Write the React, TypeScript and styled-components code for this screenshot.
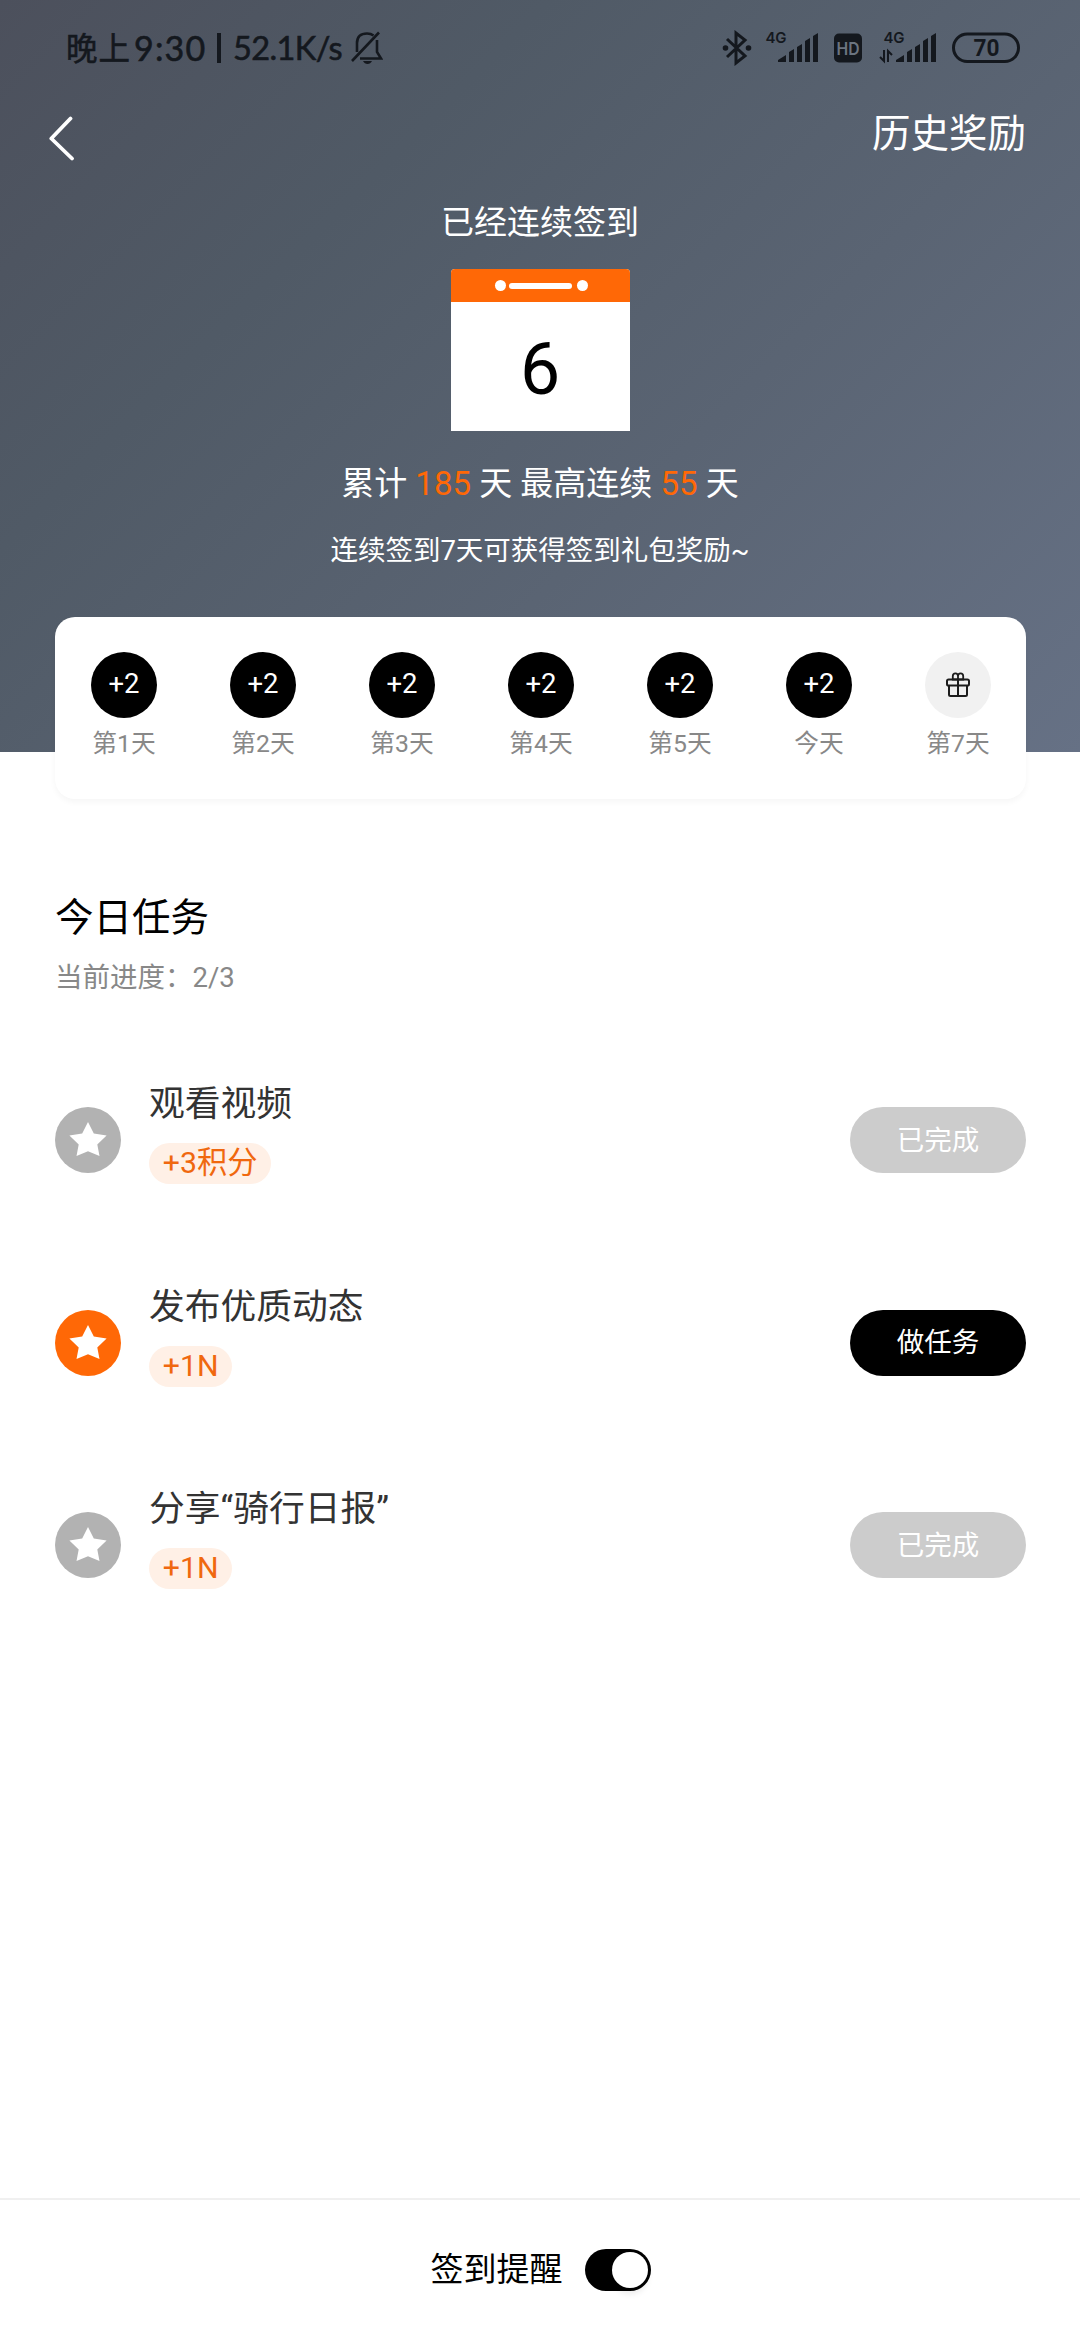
import React from 'react';
import styled, { createGlobalStyle } from 'styled-components';

const Global = createGlobalStyle`
  * { box-sizing: border-box; }
  body {
    margin: 0;
    background: #fff;
    font-family: Roboto, "Noto Sans CJK SC", sans-serif;
    font-weight: 400;
  }
`;

const Screen = styled.div`
  width: 1080px;
  height: 2340px;
  display: flex;
  flex-direction: column;
  background: #fff;
  overflow: hidden;
`;

const Hero = styled.header`
  height: 752px;
  flex: none;
  display: flex;
  flex-direction: column;
  align-items: center;
  color: #fff;
  background: linear-gradient(135deg, #4c505c 0%, #505a66 30%, #5a6473 62%, #667185 100%);
`;

const StatusBar = styled.div`
  width: 100%;
  height: 96px;
  flex: none;
  display: flex;
  align-items: center;
  justify-content: space-between;
  padding: 0 60px 0 66px;
  color: #14181e;
`;

const StatusGroup = styled.div`
  display: flex;
  align-items: center;
`;

const StatusText = styled.span<{ $width: number; $spacing?: number; $size?: number }>`
  width: ${(p) => p.$width}px;
  font-family: Lato, "Noto Sans CJK SC", sans-serif;
  font-weight: 400;
  -webkit-text-stroke: 0.6px currentColor;
  font-size: ${(p) => p.$size ?? 33}px;
  line-height: 40px;
  white-space: pre;
  letter-spacing: ${(p) => p.$spacing ?? 0}px;
`;

const Divider = styled.i`
  width: 4px;
  height: 30px;
  margin: 0 12px 0 9px;
  background: currentColor;
`;

const Icon = styled.svg<{ $gap?: number }>`
  display: block;
  flex: none;
  margin-left: ${(p) => p.$gap ?? 0}px;
`;

const NavBar = styled.nav`
  width: 100%;
  height: 84px;
  flex: none;
  display: flex;
  justify-content: space-between;
  align-items: center;
  padding: 0 54px 0 46px;
`;

const HistoryLink = styled.a`
  font-size: 38.5px;
  line-height: 56px;
  margin-top: -8px;
`;

const HeroTitle = styled.h1`
  margin: 19px 0 0;
  font-size: 33px;
  font-weight: 400;
  line-height: 48px;
`;

const Calendar = styled.div`
  width: 179px;
  height: 162px;
  margin-top: 22px;
  display: flex;
  flex-direction: column;
  border-radius: 4px 4px 0 0;
  overflow: hidden;
  background: #fff;
`;

const CalendarTop = styled.div`
  height: 33px;
  flex: none;
  display: flex;
  align-items: center;
  justify-content: center;
  padding-left: 3px;
  background: #ff6806;
`;

const Ring = styled.i`
  width: 11px;
  height: 11px;
  border-radius: 50%;
  background: #fff;
`;

const Binding = styled.i`
  width: 63px;
  height: 6px;
  margin: 0 5.5px 0 3px;
  border-radius: 3px;
  background: #fff;
`;

const CalendarDay = styled.div`
  flex: 1;
  display: flex;
  align-items: center;
  justify-content: center;
  color: #000;
  font-size: 71.5px;
  line-height: 80px;
  padding-top: 7px;
`;

const Stats = styled.p`
  margin: 29px 0 0;
  font-size: 33px;
  line-height: 48px;
  em {
    font-style: normal;
    color: #ff6806;
  }
`;

const Hint = styled.p`
  margin: 23px 0 0;
  font-size: 27.5px;
  line-height: 40px;
`;

const DaysCard = styled.section`
  height: 182px;
  flex: none;
  margin: -135px 54px 0 55px;
  padding: 35px 35px 0 36px;
  display: flex;
  justify-content: space-between;
  border-radius: 20px;
  background: #fff;
  box-shadow: 0 3px 6px rgba(0, 0, 0, 0.04);
`;

const Day = styled.div`
  width: 66px;
  display: flex;
  flex-direction: column;
  align-items: center;
`;

const DayBadge = styled.div<{ $pending?: boolean }>`
  width: 66px;
  height: 66px;
  display: flex;
  align-items: center;
  justify-content: center;
  border-radius: 50%;
  font-size: 27.5px;
  line-height: 34px;
  padding-bottom: ${(p) => (p.$pending ? 0 : 2)}px;
  color: #fff;
  background: ${(p) => (p.$pending ? '#f1f1f1' : '#000')};
`;

const DayLabel = styled.span`
  margin-top: 8px;
  font-size: 24.75px;
  line-height: 36px;
  color: #888;
  white-space: nowrap;
`;

const Tasks = styled.main`
  flex: 1;
  padding: 91px 54px 0 55px;
`;

const TasksTitle = styled.h2`
  margin: 0;
  font-size: 38.5px;
  font-weight: 400;
  line-height: 56px;
  color: #000;
`;

const Progress = styled.p`
  margin: 12px 0 0;
  font-size: 27.5px;
  line-height: 40px;
  color: #888;
`;

const TaskList = styled.ul`
  list-style: none;
  margin: 81px 0 0;
  padding: 0;
  display: flex;
  flex-direction: column;
  gap: 92.5px;
`;

const TaskRow = styled.li`
  height: 110px;
  display: flex;
  align-items: flex-start;
`;

const StarBadge = styled.div<{ $active: boolean }>`
  width: 66px;
  height: 66px;
  margin-top: 28px;
  padding-bottom: 2px;
  display: flex;
  align-items: center;
  justify-content: center;
  border-radius: 50%;
  background: ${(p) => (p.$active ? '#ff6806' : '#b2b2b2')};
`;

const TaskInfo = styled.div`
  flex: 1;
  margin-left: 28px;
  display: flex;
  flex-direction: column;
  align-items: flex-start;
`;

const TaskName = styled.span`
  font-size: 35.75px;
  line-height: 50px;
  color: #333;
`;

const Reward = styled.span`
  height: 41px;
  margin-top: 14px;
  padding: 0 13.75px;
  border-radius: 20.5px;
  font-size: 30.25px;
  line-height: 39px;
  color: #f0680f;
  background: #fff0e6;
`;

const ActionButton = styled.button<{ $done: boolean }>`
  width: 176px;
  height: 66px;
  margin-top: 28px;
  padding: 0 0 5px;
  border: 0;
  border-radius: 33px;
  font: inherit;
  font-size: 27.5px;
  color: #fff;
  background: ${(p) => (p.$done ? '#ccc' : '#000')};
`;

const Footer = styled.footer`
  height: 142px;
  flex: none;
  display: flex;
  align-items: center;
  justify-content: center;
  gap: 22px;
  padding-left: 1px;
  border-top: 2px solid #f0f0f0;
  font-size: 33px;
  line-height: 48px;
  color: #000;
`;

const Switch = styled.div`
  width: 66px;
  height: 42px;
  padding: 3px;
  display: flex;
  justify-content: flex-end;
  align-items: center;
  border-radius: 21px;
  background: #000;
`;

const Knob = styled.i`
  width: 36px;
  height: 36px;
  border-radius: 50%;
  background: #fff;
  box-shadow: 0 6px 6px rgba(0, 0, 0, 0.08);
`;

const Signal = ({ data, gap }: { data?: boolean; gap: number }) => (
  <Icon $gap={gap} width="58" height="56" viewBox="0 -10 58 56" fill="currentColor">
    <text x="4.5" y="13" fontSize="15" fontWeight="600" fontFamily="Inter, sans-serif" textLength="21">4G</text>
    <path d="M17 32v-2l8-5v7zM28 32V22l5-3v13zM36 32V17l5-3v18zM44 32V11l5-3v24zM52 32V6l5-3v29z" />
    {data && <path d="M5 20v11l-4-4M9 32V21l4 4" fill="none" stroke="currentColor" strokeWidth="2" />}
  </Icon>
);

const GiftIcon = () => (
  <Icon width="24" height="26" viewBox="0 0 24 26" fill="none" stroke="#1c1c1c" strokeWidth="2">
    <rect x="1" y="7.5" width="22" height="6" rx="1.6" />
    <path d="M3 13.500v9q0 1.500 1.500 1.500h15q1.500 0 1.500-1.500v-9M12 7.500V24" />
    <path d="M12 7.500H6.800V4q0-2.600 2.600-2.600T12 4v3.500h5.200V4q0-2.600-2.600-2.600T12 4" strokeWidth="1.800" />
  </Icon>
);

const StarIcon = () => (
  <Icon width="38" height="36" viewBox="0 0 38 36" fill="#fff">
    <path d="M19 1l5.800 11.600 12.800 1.900-9.300 9 2.200 11.500L19 30.300 7.500 35l2.200-11.500-9.300-9 12.800-1.900z" />
  </Icon>
);

const days = ['第1天', '第2天', '第3天', '第4天', '第5天', '今天', '第7天'];

const tasks = [
  { name: '观看视频', reward: '+3积分', done: true },
  { name: '发布优质动态', reward: '+1N', done: false },
  { name: '分享“骑行日报”', reward: '+1N', done: true },
];

export default function App() {
  return (
    <Screen>
      <Global />
      <Hero>
        <StatusBar>
          <StatusGroup>
            <StatusText $width={68} $size={31.5} $spacing={1}>晚上</StatusText>
            <StatusText $width={74} $size={34} $spacing={1.2}>9:30</StatusText>
            <Divider />
            <StatusText $width={118} $size={32.5} $spacing={-0.6}>52.1K/s</StatusText>
            <Icon width="32" height="34" viewBox="0 0 32 34" fill="none" stroke="currentColor" strokeWidth="2.600">
              <path d="M6 21V12Q6 2.500 16 2.500q4 0 6.500 2M1 30L28 1.500M9 27.500h21L26 21V9" />
              <path d="M12 30h9q-1.500 3-4.500 3T12 30z" fill="currentColor" stroke="none" />
            </Icon>
          </StatusGroup>
          <StatusGroup>
            <Icon width="30" height="36" viewBox="0 0 30 36" fill="none" stroke="currentColor" strokeWidth="3">
              <path d="M5 9l18 17-9 7V3l9 7L5 27" />
              <circle cx="3.500" cy="18" r="2.800" fill="currentColor" stroke="none" />
              <circle cx="26.500" cy="18" r="2.800" fill="currentColor" stroke="none" />
            </Icon>
            <Signal gap={9} />
            <Icon $gap={15} width="28" height="30" viewBox="0 0 28 30">
              <rect width="28" height="29" y="0.500" rx="5" fill="currentColor" />
              <text x="2.500" y="21.500" fontSize="17" fontWeight="600" fontFamily="Inter, sans-serif" fill="#6b7480" textLength="23" lengthAdjust="spacingAndGlyphs">HD</text>
            </Icon>
            <Signal data gap={17} />
            <Icon $gap={15} width="68" height="32" viewBox="0 0 68 32">
              <rect x="1.500" y="2" width="65" height="27.500" rx="13.750" fill="none" stroke="currentColor" strokeWidth="3" />
              <text x="21.500" y="24" fontSize="23.500" fontWeight="700" fontFamily="Roboto, sans-serif" fill="currentColor" textLength="26" lengthAdjust="spacingAndGlyphs">70</text>
            </Icon>
          </StatusGroup>
        </StatusBar>
        <NavBar>
          <Icon width="30" height="46" viewBox="0 0 30 46" fill="none" stroke="#fff" strokeWidth="3.800" strokeLinecap="round" strokeLinejoin="round">
            <path d="M24.500 3.500L5.300 23.500l20.700 20" />
          </Icon>
          <HistoryLink>历史奖励</HistoryLink>
        </NavBar>
        <HeroTitle>已经连续签到</HeroTitle>
        <Calendar>
          <CalendarTop>
            <Ring />
            <Binding />
            <Ring />
          </CalendarTop>
          <CalendarDay>6</CalendarDay>
        </Calendar>
        <Stats>
          累计 <em>185</em> 天 最高连续 <em>55</em> 天
        </Stats>
        <Hint>连续签到7天可获得签到礼包奖励~</Hint>
      </Hero>
      <DaysCard>
        {days.map((label, i) => (
          <Day key={label}>
            <DayBadge $pending={i === 6}>{i === 6 ? <GiftIcon /> : '+2'}</DayBadge>
            <DayLabel>{label}</DayLabel>
          </Day>
        ))}
      </DaysCard>
      <Tasks>
        <TasksTitle>今日任务</TasksTitle>
        <Progress>当前进度：2/3</Progress>
        <TaskList>
          {tasks.map((t) => (
            <TaskRow key={t.name}>
              <StarBadge $active={!t.done}>
                <StarIcon />
              </StarBadge>
              <TaskInfo>
                <TaskName>{t.name}</TaskName>
                <Reward>{t.reward}</Reward>
              </TaskInfo>
              <ActionButton $done={t.done}>{t.done ? '已完成' : '做任务'}</ActionButton>
            </TaskRow>
          ))}
        </TaskList>
      </Tasks>
      <Footer>
        签到提醒
        <Switch>
          <Knob />
        </Switch>
      </Footer>
    </Screen>
  );
}
